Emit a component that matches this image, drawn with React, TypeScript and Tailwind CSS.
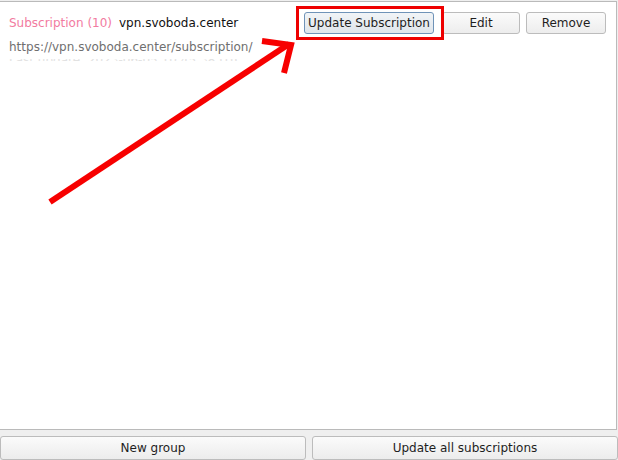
import React from "react";

function Btn({ children, className = "" }: { children: React.ReactNode; className?: string }) {
  return (
    <button
      className={
        "flex items-center justify-center rounded-[3px] border text-[12px] leading-none text-[#1e1e1e] " +
        className
      }
    >
      {children}
    </button>
  );
}

export default function App() {
  return (
    <div className="relative h-[460px] w-[618px] overflow-hidden bg-[#efefef] font-['DejaVu_Sans',sans-serif]">
      <div className="ml-[-1px] mt-px flex h-[429px] w-[618px] flex-col border border-[#bababa] bg-white">
        <div className="flex items-center pl-[9px] pr-[10px] pt-[10px]">
          <span className="text-[12px] text-[#f27ba0]">Subscription (10)</span>
          <span className="ml-[7px] text-[12px] text-[#111]">vpn.svoboda.center</span>
          <div className="ml-auto flex items-center">
            <Btn className="h-[22px] w-[130px] border-[#6f93b8] bg-gradient-to-b from-[#f1f4f7] to-[#dfe5eb]">
              Update Subscription
            </Btn>
            <Btn className="ml-[8px] h-[22px] w-[78px] border-[#bcbcbc] bg-gradient-to-b from-[#fbfbfb] to-[#ededed]">
              Edit
            </Btn>
            <Btn className="ml-[6px] h-[22px] w-[80px] border-[#bcbcbc] bg-gradient-to-b from-[#fbfbfb] to-[#ededed]">
              Remove
            </Btn>
          </div>
        </div>
        <div className="mt-[5px] h-[16px] pl-[9px] text-[12px] leading-[16px] text-[#6f6f6f]">
          https://vpn.svoboda.center/subscription/
        </div>
        <div className="mt-[4px] h-[2px] overflow-hidden pl-[9px] text-[12px] leading-[10px] text-[#e2e2e2]">
          <div className="mt-[-4px]">Last update: 2023-06-05 10:45:38 UTC</div>
        </div>
      </div>
      <div className="mt-[6px] flex gap-[6px]">
        <Btn className="h-[24px] w-[306px] border-[#bcbcbc] bg-gradient-to-b from-[#fbfbfb] to-[#ececec]">
          New group
        </Btn>
        <Btn className="h-[24px] w-[306px] border-[#bcbcbc] bg-gradient-to-b from-[#fbfbfb] to-[#ececec]">
          Update all subscriptions
        </Btn>
      </div>
      <svg
        className="pointer-events-none absolute left-0 top-0"
        width="618"
        height="460"
        viewBox="0 0 618 460"
      >
        <rect x="297.5" y="7.5" width="145" height="31" fill="none" stroke="#ee0000" strokeWidth="3" />
        <line x1="50" y1="202" x2="289" y2="44" stroke="#f70000" strokeWidth="6" />
        <polyline
          points="262,41 291,45 284,73"
          fill="none"
          stroke="#f70000"
          strokeWidth="6"
          strokeLinejoin="miter"
        />
      </svg>
    </div>
  );
}
